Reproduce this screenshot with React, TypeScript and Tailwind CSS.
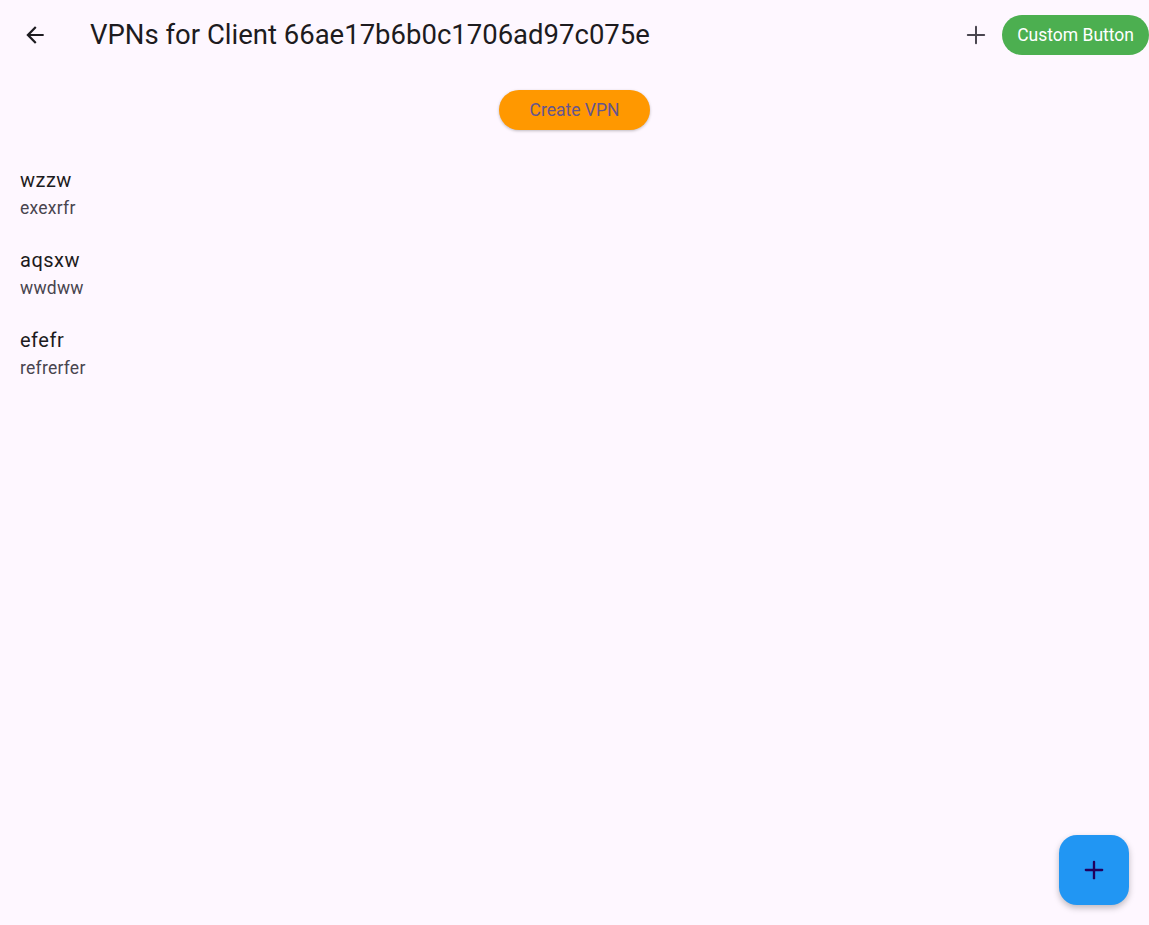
import { Plus } from "lucide-react";

const vpns = [
  { name: "wzzw", desc: "exexrfr" },
  { name: "aqsxw", desc: "wwdww" },
  { name: "efefr", desc: "refrerfer" },
];

export default function App() {
  return (
    <div
      className="relative min-h-[925px] w-full bg-[#fef7ff] text-[#1d1b20]"
      style={{ fontFamily: "Roboto, 'Liberation Sans', sans-serif" }}
    >
      {/* App bar */}
      <header className="flex h-[70px] items-center">
        <button className="ml-[11px] flex h-12 w-12 items-center justify-center">
          <svg width="26" height="26" viewBox="0 0 24 24" fill="#1d1b20">
            <path d="M20 11H7.83l5.59-5.59L12 4l-8 8 8 8 1.41-1.41L7.83 13H20v-2z" />
          </svg>
        </button>
        <h1 className="ml-[31px] flex-1 text-[27.5px] leading-none font-normal">
          VPNs for Client 66ae17b6b0c1706ad97c075e
        </h1>
        <button className="mr-[2px] flex h-12 w-12 items-center justify-center text-[#49454f]">
          <Plus size={28} strokeWidth={1.7} />
        </button>
        <button className="h-10 rounded-full bg-[#4caf50] px-[15px] text-[17.5px] font-normal text-white">
          Custom Button
        </button>
      </header>

      {/* Create button */}
      <div className="mt-5 flex justify-center">
        <button className="h-10 w-[151px] rounded-full bg-[#ff9800] text-[17.5px] font-normal text-[#65558f] shadow-[0_1px_3px_rgba(0,0,0,0.25)]">
          Create VPN
        </button>
      </div>

      {/* List */}
      <ul className="mt-6">
        {vpns.map((v) => (
          <li key={v.name} className="flex h-20 flex-col justify-center px-5">
            <span className="text-[20px] leading-[28px] tracking-[0.5px] text-[#1d1b20]">{v.name}</span>
            <span className="text-[17.5px] leading-[28px] tracking-[0.25px] text-[#49454f]">{v.desc}</span>
          </li>
        ))}
      </ul>

      {/* FAB */}
      <button className="absolute right-5 bottom-5 flex h-[70px] w-[70px] items-center justify-center rounded-[18px] bg-[#2196f3] text-[#21005d] shadow-[0_3px_6px_rgba(0,0,0,0.25)]">
        <Plus size={28} strokeWidth={2} />
      </button>
    </div>
  );
}
